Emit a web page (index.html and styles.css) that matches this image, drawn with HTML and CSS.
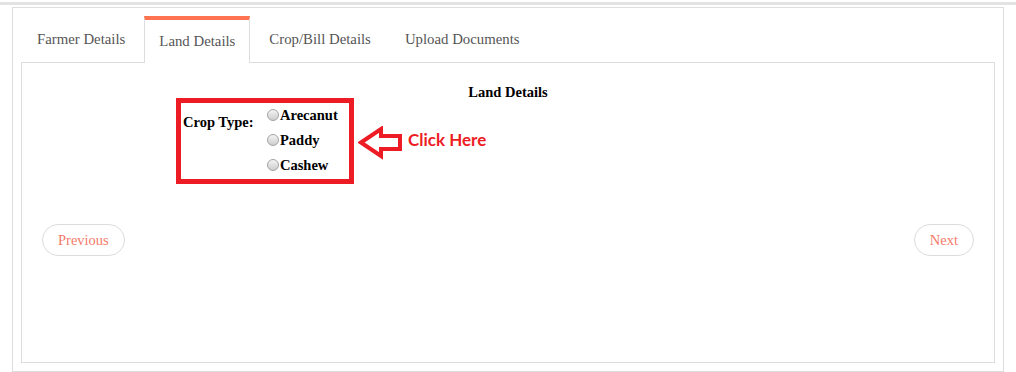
FILE: index.html
```html
<!DOCTYPE html>
<html lang="en">
<head>
  <meta charset="UTF-8" />
  <title>Land Details</title>
  <link rel="stylesheet" href="styles.css">
</head>
<body>
  <div class="topline"></div>
  <div class="wizard">
    <ul class="tabs">
      <li class="tab">Farmer Details</li>
      <li class="tab active">Land Details</li>
      <li class="tab">Crop/Bill Details</li>
      <li class="tab">Upload Documents</li>
    </ul>
    <div class="pane">
      <h4 class="pane-title">Land Details</h4>
      <div class="field-row">
        <div class="crop-box">
          <div class="crop-label">Crop Type:</div>
          <div class="crop-options">
            <label><input type="radio" name="crop" value="arecanut">Arecanut</label>
            <label><input type="radio" name="crop" value="paddy">Paddy</label>
            <label><input type="radio" name="crop" value="cashew">Cashew</label>
          </div>
        </div>
        <svg class="hint-arrow" width="46" height="34" viewBox="0 0 46 34">
          <polygon points="3,16.5 23,3 23,10 42,10 42,23 23,23 23,30" fill="none" stroke="#ed1c24" stroke-width="4" stroke-linejoin="miter"/>
        </svg>
        <span class="hint-text">Click Here</span>
      </div>
      <div class="pager">
        <button type="button" class="btn">Previous</button>
        <button type="button" class="btn">Next</button>
      </div>
    </div>
  </div>
</body>
</html>
```

FILE: styles.css
```css
body {
  margin: 0;
  font-family: "Liberation Serif", serif;
  background: #fff;
}
.topline {
  height: 3px;
  margin-top: 2px;
  background: #e3e3e3;
}
.wizard {
  box-sizing: border-box;
  width: 992px;
  height: 365px;
  margin: 2px 0 0 12px;
  border: 1px solid #ddd;
  padding: 8px;
  display: flex;
  flex-direction: column;
}
.tabs {
  list-style: none;
  margin: 0;
  padding: 0 0 0 1px;
  display: flex;
  gap: 4px;
  height: 46px;
}
.tab {
  box-sizing: border-box;
  height: 46px;
  padding: 0 15px;
  display: flex;
  align-items: center;
  font-size: 14.8px;
  color: #555;
}
.tab.active {
  height: 47px;
  padding: 0 14px;
  border-top: 4px solid #ff7350;
  border-left: 1px solid #ddd;
  border-right: 1px solid #ddd;
  background: #fff;
  position: relative;
  z-index: 1;
}
.pane {
  flex: 1;
  border: 1px solid #ddd;
  padding: 21px 20px 0;
}
.pane-title {
  margin: 0;
  text-align: center;
  font-size: 14.5px;
  line-height: 16px;
  font-weight: bold;
  color: #000;
}
.field-row {
  display: flex;
  align-items: flex-start;
  margin: -2px 0 0 134px;
}
.crop-box {
  box-sizing: border-box;
  width: 178px;
  height: 86px;
  border: 5px solid #ed1c24;
  display: flex;
  font-size: 14.5px;
  font-weight: bold;
  color: #000;
}
.crop-label {
  width: 84px;
  padding: 9px 0 0 2px;
  line-height: 20px;
}
.crop-options label {
  display: block;
  height: 25px;
  line-height: 25px;
}
.crop-options input {
  appearance: none;
  -webkit-appearance: none;
  box-sizing: border-box;
  width: 12px;
  height: 12px;
  margin: 6px 1px 0 0;
  vertical-align: top;
  border: 1px solid #a3a3a3;
  border-radius: 50%;
  background: linear-gradient(#f4f4f4, #cdcdcd);
}
.hint-arrow {
  margin: 28px 0 0 4px;
}
.hint-text {
  margin: 32px 0 0 4px;
  font-family: Lato, sans-serif;
  font-size: 17px;
  font-weight: bold;
  line-height: 20px;
  color: #ed1c24;
}
.pager {
  display: flex;
  justify-content: space-between;
  margin-top: 40px;
}
.btn {
  height: 32px;
  padding: 0 15px;
  border: 1px solid #ddd;
  border-radius: 16px;
  background: #fff;
  color: #f47b6b;
  font-family: "Liberation Serif", serif;
  font-size: 14.5px;
  cursor: pointer;
}
```
